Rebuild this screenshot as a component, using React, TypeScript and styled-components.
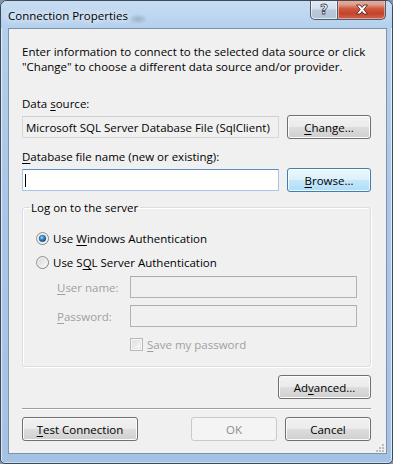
import React from "react";
import styled, { createGlobalStyle } from "styled-components";

const FONT = `"Open Sans", "Noto Sans", "DejaVu Sans", sans-serif`;

const Global = createGlobalStyle`
  html, body { margin: 0; padding: 0; }
  body {
    width: 393px;
    height: 464px;
    overflow: hidden;
    font-family: ${FONT};
    font-size: 11.5px;
    color: #000;
    background: #7d95ad;
  }
  * { box-sizing: border-box; }
`;

const Window = styled.div`
  width: 393px;
  height: 464px;
  border: 1px solid #3e4a58;
  border-radius: 7px 7px 5px 5px;
  background:
    linear-gradient(90deg, rgba(255,255,255,0.35) 0, rgba(255,255,255,0) 2px, rgba(255,255,255,0) calc(100% - 2px), rgba(255,255,255,0.35) 100%),
    linear-gradient(180deg, #c3d9f0 0%, #b4cfec 6%, #a9c7e8 40%, #a4c2e3 100%);
  display: flex;
  flex-direction: column;
  box-shadow: inset 0 0 0 1px rgba(255, 255, 255, 0.45);
  overflow: hidden;
`;

const TitleBar = styled.div`
  height: 27px;
  flex: none;
  display: flex;
  align-items: flex-start;
  padding-left: 7px;
  background:
    radial-gradient(ellipse 10px 5px at 137px 18px, rgba(60, 70, 80, 0.25), rgba(60, 70, 80, 0) 100%),
    linear-gradient(180deg, #c6dcf2 0%, #bdd6f0 60%, #b3cfec 100%);
`;

const Title = styled.div`
  font-family: ${FONT};
  font-size: 11.5px;
  line-height: 15px;
  margin-top: 7px;
  color: #000;
  text-shadow: 0 0 6px rgba(255, 255, 255, 0.95), 0 0 10px rgba(255, 255, 255, 0.8);
  flex: 1;
`;

const CaptionButtons = styled.div`
  display: flex;
  margin-top: -1px;
  margin-right: 6px;
  height: 20px;
`;

const CaptionButton = styled.div<{ $kind: "help" | "close" }>`
  height: 20px;
  width: ${(p) => (p.$kind === "close" ? 48 : 28)}px;
  border: 1px solid #4d5c70;
  border-top: none;
  ${(p) =>
    p.$kind === "close"
      ? `border-left: none; border-radius: 0 0 5px 0;
         background: linear-gradient(180deg, #e9b1a3 0%, #e09a88 25%, #cf5a40 45%, #c4432a 70%, #d2644a 100%);
         box-shadow: inset 0 0 0 1px rgba(255,210,200,0.55);`
      : `border-radius: 0 0 0 5px;
         background: linear-gradient(180deg, #e4ecf5 0%, #d3dfec 45%, #b9c9da 55%, #b3c4d7 100%);
         box-shadow: inset 0 0 0 1px rgba(255,255,255,0.6);`}
  display: flex;
  align-items: center;
  justify-content: center;
`;

const HelpGlyph = styled.span`
  font-family: "DejaVu Sans", sans-serif;
  font-weight: bold;
  font-size: 14px;
  line-height: 14px;
  color: #fff;
  -webkit-text-stroke: 0.8px #3b4a5c;
  margin-top: -1px;
`;

const Client = styled.div`
  flex: 1;
  margin: 0 5px 9px 7px;
  border: 1px solid #7f93a8;
  background: #f0f0f0;
  padding: 15px 15px 12px 13px;
  display: flex;
  flex-direction: column;
  position: relative;
`;

const Intro = styled.p`
  margin: 0;
  line-height: 15px;
`;

const Label = styled.div<{ $top: number; $disabled?: boolean }>`
  line-height: 15px;
  margin-top: ${(p) => p.$top}px;
  color: ${(p) => (p.$disabled ? "#a0a0a0" : "#000")};
  white-space: nowrap;
`;

const Key = styled.span`
  text-decoration: underline;
  text-underline-offset: 2px;
  text-decoration-thickness: 1px;
`;

const FieldRow = styled.div<{ $top: number }>`
  display: flex;
  align-items: center;
  gap: 8px;
  height: 24px;
  margin-top: ${(p) => p.$top}px;
`;

const TextBox = styled.div<{ $variant: "readonly" | "focus" | "disabled"; $width: number }>`
  width: ${(p) => p.$width}px;
  height: 22px;
  display: flex;
  align-items: center;
  padding-left: 3px;
  white-space: nowrap;
  overflow: hidden;
  ${(p) =>
    p.$variant === "readonly"
      ? `background: #f0f0f0; border: 1px solid #d9d9d9; border-top-color: #cfcfcf;`
      : p.$variant === "focus"
      ? `background: #fff; border: 1px solid #a6c6e6; border-top-color: #5e8fc4;`
      : `background: #f0f0f0; border: 1px solid #b3b3b3; border-top-color: #adadad;`}
`;

const Caret = styled.span`
  width: 1px;
  height: 13px;
  background: #000;
  margin-left: -1px;
`;

const Button = styled.div<{ $variant?: "normal" | "hot" | "disabled"; $width: number }>`
  width: ${(p) => p.$width}px;
  height: 24px;
  flex: none;
  border-radius: 3px;
  display: flex;
  align-items: center;
  justify-content: center;
  white-space: nowrap;
  ${(p) =>
    p.$variant === "hot"
      ? `border: 1px solid #3c7fb1;
         background: linear-gradient(180deg, #ecf7fd 0%, #dcf1fc 48%, #c4e7fb 52%, #b0ddf6 100%);
         box-shadow: inset 0 0 0 1px rgba(255,255,255,0.75);
         color: #000;`
      : p.$variant === "disabled"
      ? `border: 1px solid #c9c9c9;
         background: #f4f4f4;
         color: #8d8d8d;`
      : `border: 1px solid #707070;
         background: linear-gradient(180deg, #f2f2f2 0%, #ebebeb 48%, #dddddd 52%, #cfcfcf 100%);
         box-shadow: inset 0 0 0 1px #fcfcfc;
         color: #000;`}
`;

const Group = styled.fieldset`
  margin: 8px 0 0 0;
  padding: 15px 13px 16px 13px;
  border: 1px solid #d5dfe5;
  border-radius: 3px;
  box-shadow: inset 1px 1px 0 #ffffff, 1px 1px 0 #ffffff;
  height: 167px;
  display: flex;
  flex-direction: column;
  min-width: 0;
`;

const Legend = styled.legend`
  padding: 0 2px 0 1px;
  margin-left: -6px;
  line-height: 15px;
  font-size: 11.5px;
`;

const OptionRow = styled.div<{ $top: number; $indent?: number; $disabled?: boolean }>`
  display: flex;
  align-items: center;
  gap: 4px;
  height: 17px;
  margin-top: ${(p) => p.$top}px;
  margin-left: ${(p) => p.$indent ?? 0}px;
  color: ${(p) => (p.$disabled ? "#a0a0a0" : "#000")};
`;

const CredRow = styled.div<{ $top: number }>`
  display: flex;
  align-items: center;
  height: 22px;
  margin-top: ${(p) => p.$top}px;
  padding-left: 21px;
  color: #a0a0a0;
`;

const CredLabel = styled.div`
  width: 73px;
  flex: none;
`;

const RightRow = styled.div<{ $top: number }>`
  display: flex;
  justify-content: flex-end;
  margin-top: ${(p) => p.$top}px;
`;

const Separator = styled.div`
  height: 1px;
  background: #a0a0a0;
  margin-top: 9px;
  box-shadow: 0 1px 0 #ffffff;
`;

const BottomRow = styled.div`
  display: flex;
  align-items: center;
  margin-top: 8px;
  gap: 8px;
`;

const Spacer = styled.div`
  flex: 1;
`;

const Grip = styled.svg`
  position: absolute;
  right: 2px;
  bottom: 1px;
`;

const Radio = ({ checked }: { checked?: boolean }) => (
  <svg width="13" height="13" viewBox="0 0 13 13" style={{ flex: "none" }}>
    <defs>
      <linearGradient id={`rg-ring`} x1="0" y1="0" x2="1" y2="1">
        <stop offset="0" stopColor="#9c9c9c" />
        <stop offset="1" stopColor="#7a7a7a" />
      </linearGradient>
      <linearGradient id={`rg-in`} x1="0" y1="0" x2="1" y2="1">
        <stop offset="0" stopColor="#d6d6d6" />
        <stop offset="1" stopColor="#fbfbfb" />
      </linearGradient>
      <radialGradient id="rg-dot" cx="0.4" cy="0.35" r="0.7">
        <stop offset="0" stopColor="#a7dcfa" />
        <stop offset="0.45" stopColor="#2f8ad1" />
        <stop offset="1" stopColor="#0f3f72" />
      </radialGradient>
    </defs>
    <circle cx="6.5" cy="6.5" r="6" fill="url(#rg-in)" stroke="url(#rg-ring)" strokeWidth="1" />
    <circle cx="6.5" cy="6.5" r="4.6" fill="none" stroke="#f4f4f4" strokeWidth="0.8" />
    {checked && <circle cx="6.5" cy="6.5" r="3.3" fill="url(#rg-dot)" stroke="#1b4d7c" strokeWidth="0.5" />}
  </svg>
);

const CheckBox = () => (
  <svg width="13" height="13" viewBox="0 0 13 13" style={{ flex: "none" }}>
    <defs>
      <linearGradient id="cb-in" x1="0" y1="0" x2="1" y2="1">
        <stop offset="0" stopColor="#dedede" />
        <stop offset="1" stopColor="#fbfbfb" />
      </linearGradient>
    </defs>
    <rect x="0.5" y="0.5" width="12" height="12" fill="#f6f6f6" stroke="#b8b8b8" />
    <rect x="2.5" y="2.5" width="8" height="8" fill="url(#cb-in)" stroke="#e6e6e6" />
  </svg>
);

export default function App() {
  return (
    <>
      <Global />
      <Window>
        <TitleBar>
          <Title>Connection Properties</Title>
          <CaptionButtons>
            <CaptionButton $kind="help">
              <HelpGlyph>?</HelpGlyph>
            </CaptionButton>
            <CaptionButton $kind="close">
              <svg width="14" height="11" viewBox="0 0 14 11">
                <path
                  d="M1.5 1 H5 L7 3.4 L9 1 H12.5 L8.8 5.5 L12.5 10 H9 L7 7.6 L5 10 H1.5 L5.2 5.5 Z"
                  fill="#ffffff"
                  stroke="#4a2a24"
                  strokeWidth="0.9"
                  strokeLinejoin="round"
                />
              </svg>
            </CaptionButton>
          </CaptionButtons>
        </TitleBar>
        <Client>
          <Intro>
            Enter information to connect to the selected data source or click
            <br />
            "Change" to choose a different data source and/or provider.
          </Intro>
          <Label $top={22}>
            Data <Key>s</Key>ource:
          </Label>
          <FieldRow $top={4}>
            <TextBox $variant="readonly" $width={257}>
              Microsoft SQL Server Database File (SqlClient)
            </TextBox>
            <Button $width={84}>
              <Key>C</Key>hange...
            </Button>
          </FieldRow>
          <Label $top={10}>
            <Key>D</Key>atabase file name (new or existing):
          </Label>
          <FieldRow $top={4}>
            <TextBox $variant="focus" $width={257}>
              <Caret />
            </TextBox>
            <Button $variant="hot" $width={84}>
              <Key>B</Key>rowse...
            </Button>
          </FieldRow>
          <Group>
            <Legend>Log on to the server</Legend>
            <OptionRow $top={0}>
              <Radio checked />
              <span>
                Use <Key>W</Key>indows Authentication
              </span>
            </OptionRow>
            <OptionRow $top={7}>
              <Radio />
              <span>
                Use S<Key>Q</Key>L Server Authentication
              </span>
            </OptionRow>
            <CredRow $top={5}>
              <CredLabel>
                <Key>U</Key>ser name:
              </CredLabel>
              <TextBox $variant="disabled" $width={228} />
            </CredRow>
            <CredRow $top={7}>
              <CredLabel>
                <Key>P</Key>assword:
              </CredLabel>
              <TextBox $variant="disabled" $width={228} />
            </CredRow>
            <OptionRow $top={9} $indent={94} $disabled>
              <CheckBox />
              <span>
                <Key>S</Key>ave my password
              </span>
            </OptionRow>
          </Group>
          <RightRow $top={8}>
            <Button $width={93}>
              Ad<Key>v</Key>anced...
            </Button>
          </RightRow>
          <Separator />
          <BottomRow>
            <Button $width={116}>
              <Key>T</Key>est Connection
            </Button>
            <Spacer />
            <Button $variant="disabled" $width={86}>
              OK
            </Button>
            <Button $width={86}>Cancel</Button>
          </BottomRow>
          <Grip width="8" height="8" viewBox="0 0 8 8">
            <g fill="#bcbcbc">
              <rect x="6" y="0" width="2" height="2" />
              <rect x="3" y="3" width="2" height="2" />
              <rect x="6" y="3" width="2" height="2" />
              <rect x="0" y="6" width="2" height="2" />
              <rect x="3" y="6" width="2" height="2" />
              <rect x="6" y="6" width="2" height="2" />
            </g>
          </Grip>
        </Client>
      </Window>
    </>
  );
}
